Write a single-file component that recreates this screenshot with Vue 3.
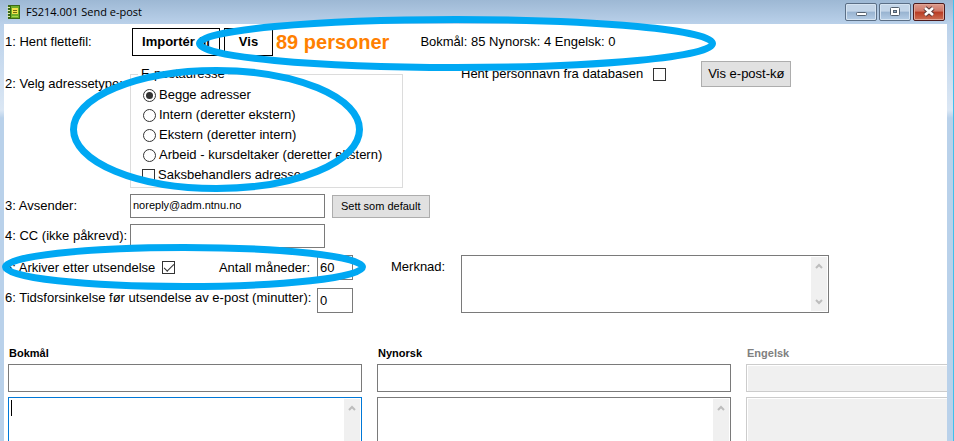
<script setup>
import { ref } from 'vue'

const addressTypes = [
  { value: 'begge', label: 'Begge adresser' },
  { value: 'intern', label: 'Intern (deretter ekstern)' },
  { value: 'ekstern', label: 'Ekstern (deretter intern)' },
  { value: 'arbeid', label: 'Arbeid - kursdeltaker (deretter ekstern)' },
]
const languages = [
  { id: 'nb', name: 'Bokmål', active: true, disabled: false },
  { id: 'nn', name: 'Nynorsk', active: false, disabled: false },
  { id: 'en', name: 'Engelsk', active: false, disabled: true },
]

const addressType = ref('begge')
const caseWorker = ref(false)
const fetchNames = ref(false)
const sender = ref('noreply@adm.ntnu.no')
const cc = ref('')
const archive = ref(true)
const months = ref('60')
const delay = ref('0')
const note = ref('')
</script>

<template>
  <div class="window">
    <header class="titlebar">
      <svg class="app-icon" width="14" height="16" viewBox="0 0 14 16" aria-hidden="true">
        <rect x="1.5" y="1.5" width="11" height="13" fill="#6fae2a" stroke="#3c6a16" />
        <rect x="2" y="2" width="2" height="12" fill="#38660f" />
        <rect x="5" y="4" width="6" height="6" fill="#f4e14e" />
        <path d="M6 6.5h4M6 8.5h4" stroke="#6d6a10" />
        <path d="M5 12.5h6" stroke="#a9d64c" />
        <path d="M0 3.5h3M0 6.5h3M0 9.5h3M0 12.5h3" stroke="#d7e6b0" />
      </svg>
      <h1 class="title">FS214.001 Send e-post</h1>
      <div class="controls">
        <button type="button" class="control" aria-label="Minimer">
          <svg width="30" height="16" viewBox="0 0 30 16"><rect x="10.5" y="8.5" width="10" height="3" rx="1" fill="#fff" stroke="#53606e" /></svg>
        </button>
        <button type="button" class="control" aria-label="Maksimer">
          <svg width="30" height="16" viewBox="0 0 30 16"><rect x="10.5" y="3.5" width="9" height="8" rx="1" fill="#fff" stroke="#53606e" /><rect x="13.5" y="6.5" width="3" height="2" fill="#8fa9c6" stroke="#53606e" /></svg>
        </button>
        <button type="button" class="control close" aria-label="Lukk">
          <svg width="30" height="16" viewBox="0 0 30 16"><path d="M11 4l8 7M19 4l-8 7" stroke="#5b3a3a" stroke-width="4.6" /><path d="M11 4l8 7M19 4l-8 7" stroke="#fff" stroke-width="2.6" /></svg>
        </button>
      </div>
    </header>

    <main class="client">
      <div class="row">
        <span class="step">1: Hent flettefil:</span>
        <button type="button" class="file-button">Importér fil</button>
        <button type="button" class="file-button view">Vis</button>
        <strong class="count">89 personer</strong>
        <span class="split">Bokmål: 85 Nynorsk: 4 Engelsk: 0</span>
      </div>

      <div class="row address-row">
        <span class="step">2: Velg adressetype:</span>
        <fieldset class="group">
          <legend>E-postadresse</legend>
          <label v-for="type in addressTypes" :key="type.value" class="option">
            <input v-model="addressType" type="radio" name="address" class="radio" :value="type.value" />
            {{ type.label }}
          </label>
          <label class="option">
            <input v-model="caseWorker" type="checkbox" class="check" />
            Saksbehandlers adresse
          </label>
        </fieldset>
        <div class="queue">
          <label class="names">
            Hent personnavn fra databasen
            <input v-model="fetchNames" type="checkbox" class="check" />
          </label>
          <button type="button" class="button">Vis e-post-kø</button>
        </div>
      </div>

      <div class="row">
        <label class="step" for="sender">3: Avsender:</label>
        <input id="sender" v-model="sender" type="text" class="field address" />
        <button type="button" class="button small">Sett som default</button>
      </div>

      <div class="row">
        <label class="step" for="cc">4: CC (ikke påkrevd):</label>
        <input id="cc" v-model="cc" type="text" class="field address" />
      </div>

      <div class="row settings">
        <div class="timing">
          <div class="timing-row">
            <label class="archive">
              5: Arkiver etter utsendelse
              <input v-model="archive" type="checkbox" class="check" />
            </label>
            <label class="pair">Antall måneder:
              <input v-model="months" type="text" class="field number" />
            </label>
          </div>
          <label class="timing-row">
            6: Tidsforsinkelse før utsendelse av e-post (minutter):
            <input v-model="delay" type="text" class="field number" />
          </label>
        </div>
        <label class="note-label" for="note">Merknad:</label>
        <div class="area note">
          <textarea id="note" v-model="note"></textarea>
          <div class="scroll" aria-hidden="true">
            <svg width="8" height="6" viewBox="0 0 8 6"><path d="M1 5l3-3 3 3" /></svg>
            <svg width="8" height="6" viewBox="0 0 8 6"><path d="M1 1l3 3 3-3" /></svg>
          </div>
        </div>
      </div>

      <div class="messages">
        <section v-for="lang in languages" :key="lang.id" class="message" :class="{ disabled: lang.disabled }">
          <label class="language" :for="'subject-' + lang.id">{{ lang.name }}</label>
          <input :id="'subject-' + lang.id" type="text" class="field subject" :disabled="lang.disabled" />
          <div class="area body" :class="{ active: lang.active }">
            <textarea :aria-label="lang.name" :disabled="lang.disabled"></textarea>
            <div v-if="!lang.disabled" class="scroll" aria-hidden="true">
              <svg width="8" height="6" viewBox="0 0 8 6"><path d="M1 5l3-3 3 3" /></svg>
            </div>
          </div>
        </section>
      </div>
    </main>

    <svg class="marks" width="954" height="441" viewBox="0 0 954 441" aria-hidden="true">
      <ellipse cx="456" cy="43.5" rx="256.5" ry="24" />
      <ellipse cx="216.5" cy="129.5" rx="143" ry="59" />
      <ellipse cx="184" cy="267" rx="178.5" ry="19.5" />
    </svg>
  </div>
</template>

<style>
body {
  overflow: hidden;
}
</style>

<style scoped>
* {
  box-sizing: border-box;
}
.window {
  position: relative;
  display: flex;
  flex-direction: column;
  height: 100vh;
  overflow: hidden;
  padding: 0 6px 0 4px;
  border-right: 1px solid #3fc0ec;
  background: linear-gradient(#9db8d4, #bad1ea 24px, #dbe7f4 110px, #b9d1ea 118px);
  color: #000;
  font: 13px/20px "Liberation Sans", Arial, sans-serif;
}
button,
input,
textarea {
  margin: 0;
  color: inherit;
  font: inherit;
}
.titlebar {
  display: flex;
  flex: none;
  align-items: center;
  height: 24px;
  padding: 0 2px 0 3px;
}
.title {
  margin: 0 0 0 5px;
  font: 11px/24px "Open Sans", "Noto Sans", sans-serif;
}
.controls {
  display: flex;
  gap: 2px;
  margin-left: auto;
}
.control {
  width: 32px;
  height: 18px;
  padding: 0;
  border: 1px solid #5b6f86;
  border-radius: 2px;
  background: linear-gradient(#c3d5e8 0 45%, #98b3d0 50%, #b5cde6);
  box-shadow: inset 0 0 0 1px #d5e3f1;
}
.control svg {
  display: block;
}
.close {
  border-color: #4c1a1c;
  background: linear-gradient(#dc9a8c 0, #cf7767 45%, #b83a22 50%, #cc6f55);
  box-shadow: inset 0 0 0 1px #e0a596;
}
.client {
  display: flex;
  flex: 1;
  flex-direction: column;
  min-height: 0;
  padding-top: 4px;
  background: #fff;
}
.row {
  display: flex;
  flex: none;
  align-items: center;
  padding-left: 1px;
}
.row + .row {
  margin-top: 6px;
}
.step {
  flex: none;
  width: 125px;
  white-space: nowrap;
}
.file-button {
  width: 88px;
  height: 28px;
  margin: 0 2px;
  padding: 0;
  border: 1px solid #000;
  background: #fff;
  font-weight: bold;
}
.view {
  width: 49px;
}
.count {
  margin-left: 1px;
  color: #ff8000;
  font-size: 20px;
}
.split {
  margin-left: 31px;
}
.row.address-row {
  align-items: flex-start;
  margin-top: 5px;
}
.address-row .step {
  padding-top: 13px;
}
.group {
  width: 273px;
  margin: 2px 0 0;
  padding: 0 0 2px 11px;
  border: 1px solid #dcdcdc;
}
.group legend {
  margin-left: -4px;
  padding: 0 3px;
  line-height: 22px;
}
.option {
  display: flex;
  gap: 3px;
  align-items: center;
  height: 20px;
  white-space: nowrap;
}
.radio,
.check {
  display: grid;
  flex: none;
  place-content: center;
  width: 13px;
  height: 13px;
  border: 1px solid #333;
  background: #fff;
  appearance: none;
}
.radio {
  margin-left: 1px;
  border-radius: 50%;
}
.radio:checked::before {
  width: 7px;
  height: 7px;
  border-radius: 50%;
  background: #333;
  content: "";
}
.check:checked::before {
  width: 9px;
  height: 4px;
  margin-bottom: 3px;
  border: solid #333;
  border-width: 0 0 1px 1px;
  content: "";
  transform: rotate(-45deg);
}
.queue {
  display: flex;
  gap: 35px;
  align-items: center;
  margin-left: 58px;
}
.names {
  display: flex;
  gap: 10px;
  align-items: center;
}
.button {
  height: 26px;
  padding: 0 6px;
  border: 1px solid #adadad;
  background: #e1e1e1;
}
.small {
  height: 23px;
  margin-left: 7px;
  padding: 0 8px;
  font-size: 11px;
}
.field {
  height: 24px;
  padding: 0 2px;
  border: 1px solid #7a7a7a;
  border-radius: 0;
  outline: 0;
  background: #fff;
}
.address {
  width: 195px;
  padding-bottom: 3px;
  font-size: 11px;
}
.row.settings {
  align-items: flex-start;
  margin-top: 7px;
}
.timing {
  display: flex;
  flex: none;
  flex-direction: column;
  gap: 8px;
  width: 348px;
}
.timing-row,
.archive,
.pair {
  display: flex;
  justify-content: space-between;
  white-space: nowrap;
}
.archive,
.pair {
  gap: 7px;
  align-items: center;
}
.number {
  width: 36px;
  height: 25px;
}
.note-label {
  width: 108px;
  padding: 2px 0 0 38px;
}
.area {
  display: flex;
  padding: 1px;
  border: 1px solid #7a7a7a;
  background: #fff;
}
.area textarea {
  flex: 1;
  min-width: 0;
  padding: 2px;
  border: 0;
  outline: 0;
  background: transparent;
  resize: none;
}
.note {
  width: 368px;
  height: 58px;
}
.scroll {
  display: flex;
  flex: none;
  flex-direction: column;
  align-items: center;
  justify-content: space-between;
  width: 16px;
  padding: 6px 0;
  background: #f0f0f0;
}
.scroll path {
  fill: none;
  stroke: #bdbdbd;
  stroke-width: 2;
}
.messages {
  display: grid;
  flex: 1;
  grid-template-columns: 354fr 354fr 201fr;
  gap: 15px;
  min-height: 0;
  margin: 29px 0 0 4px;
}
.message {
  display: flex;
  flex-direction: column;
  min-width: 0;
}
.language {
  padding-left: 1px;
  font-size: 11px;
  font-weight: bold;
  line-height: 22px;
}
.subject {
  width: 100%;
  height: 28px;
}
.body {
  position: relative;
  flex: 1;
  margin-top: 5px;
  border-bottom: 0;
}
.active {
  border-color: #0078d7;
}
.active::before {
  position: absolute;
  top: 2px;
  left: 2px;
  width: 1px;
  height: 16px;
  background: #000;
  content: "";
}
.disabled .language {
  color: #808080;
}
.disabled .field,
.disabled .area {
  border-color: #ccc;
  border-right: 0;
  background: #f0f0f0;
  box-shadow: inset 1px 1px #fff;
}
.marks {
  position: absolute;
  top: 0;
  left: 0;
  pointer-events: none;
}
.marks ellipse {
  fill: none;
  stroke: #00a8f3;
  stroke-width: 7;
}
</style>
